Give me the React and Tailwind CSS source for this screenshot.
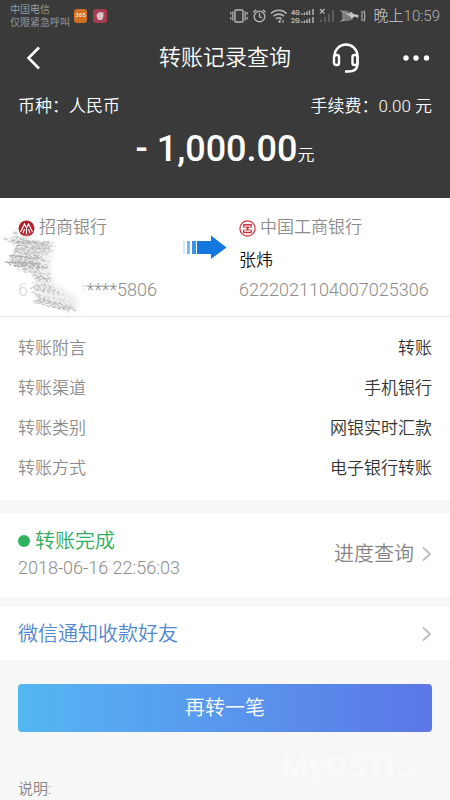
import React from 'react';

const details = [
  { label: '转账附言', value: '转账' },
  { label: '转账渠道', value: '手机银行' },
  { label: '转账类别', value: '网银实时汇款' },
  { label: '转账方式', value: '电子银行转账' },
];

// [y, left, right, slope] of each scribble row
const scribbleRows = [
  [5, 8, 15, 0.3], [8, 8, 17, 0.3], [11, 9, 19, 0.3], [14, 9, 28, 0.2], [16, -1, 40, 0.08], [18, 4, 56, 0.04],
  [20, 8, 54, 0.05], [23, 9, 50, 0.05], [26, 7, 52, 0.05], [29, 6, 47, 0.05], [32, 5, 45, 0.05],
  [35, 7, 47, 0.05], [38, 1, 42, 0.05], [40, 0, 46, 0.05], [42, 9, 50, 0.05], [45, 12, 42, 0.08],
  [48, 18, 50, 0.1], [51, 27, 48, 0.1], [54, 28, 52, 0.1], [57, 29, 50, 0.1], [60, 27, 56, 0.12],
  [63, 26, 58, 0.15], [66, 29, 64, 0.2], [69, 27, 70, 0.22], [72, 32, 76, 0.24], [75, 30, 74, 0.26],
  [78, 28, 75, 0.27],
];

const buildStrokes = () => {
  let seed = 7;
  const rand = () => {
    seed = (seed * 16807) % 2147483647;
    return seed / 2147483647;
  };
  const strokes = [];
  scribbleRows.forEach(([y, left, right, slope]) => {
    for (let i = 0; i < 4; i++) {
      const x1 = left + rand() * 6;
      const x2 = right - rand() * 10;
      let d = '';
      for (let x = x1; x < x2; x += 1.5) {
        const py = y + i * 0.8 + (x - left) * slope + rand() * 2.4 - 1.2;
        d += `${d ? 'L' : 'M'}${x.toFixed(1)} ${py.toFixed(1)}`;
      }
      strokes.push({ d, dash: `${(2 + rand() * 4).toFixed(1)} ${(1 + rand() * 2.5).toFixed(1)}`, tone: rand() });
    }
  });
  return strokes;
};

const strokes = buildStrokes();

const Scribble = () => (
  <svg className="absolute left-1 top-6 overflow-visible pointer-events-none" width="100" height="92" viewBox="0 0 100 92" aria-hidden="true">
    <defs>
      <filter id="soft" x="-20%" y="-20%" width="140%" height="140%">
        <feGaussianBlur stdDeviation="2" />
      </filter>
    </defs>
    <path d="M8 15 L34 15 L56 20 L78 40 L82 70 L76 84 L30 78 L22 56 L6 44 Z" fill="#fff" filter="url(#soft)" />
    <path d="M10 18 L50 20 L46 44 L50 60 L74 76 L74 88 L30 78 L30 52 L10 42 Z" fill="#f0f0f0" filter="url(#soft)" />
    <g fill="none" strokeWidth="0.8">
      {strokes.map((s, i) => (
        <path key={i} d={s.d} strokeDasharray={s.dash} stroke={s.tone > 0.7 ? '#9e9e9e' : s.tone > 0.25 ? '#bdbdbd' : '#f8f8f8'} />
      ))}
    </g>
  </svg>
);

const StatusIcons = () => (
  <svg width="140" height="18" viewBox="0 0 140 18" fill="none" stroke="#b4b4b4" strokeWidth="1.4" aria-hidden="true">
    {/* vibrate */}
    <rect x="5" y="3" width="8" height="12" rx="1" />
    <path d="M2.8 4.500v9M15.200 4.500v9M.8 5v2.500M.8 10v2.500M17.200 5v2.500M17.200 10v2.500" strokeWidth="1.2" />
    {/* alarm */}
    <circle cx="29.500" cy="9.500" r="5.300" />
    <path d="M29.500 6.300v3.400l2.300 1.300M23.300 5.300l3-2.600M35.700 5.300l-3-2.600" />
    {/* wifi */}
    <path d="M41 6.500c4.300-4.300 11.300-4.300 15.600 0M43.500 9.300c2.900-2.900 7.700-2.900 10.600 0M46 12c1.500-1.500 4.100-1.500 5.600 0" strokeWidth="1.600" />
    <path d="M48.500 15.500l1.500-2.500v3M53 13v3" strokeWidth="1.100" />
    {/* dual sim signal */}
    <g fontFamily="Roboto, sans-serif" fontSize="7" fontWeight="700" fill="#b4b4b4" stroke="none">
      <text x="61" y="8">4G</text>
      <text x="61" y="16">2G</text>
    </g>
    <path d="M72 8v-1.500M74.500 8v-2.500M77 8v-3.500M79.500 8v-4.500M83 8v-6M72 16v-1.500M74.500 16v-2.500M77 16v-3.500M79.500 16v-4.500M83 16v-6" strokeWidth="1.500" />
    {/* empty signal */}
    <path d="M90 2l4.500 4.500M94.500 2l-4.500 4.500" strokeWidth="1.300" />
    <path d="M91 15v-2.500M95 15v-5M99 15v-8M103 15v-12" stroke="#626262" strokeWidth="1.800" />
    {/* battery */}
    <path d="M112 3.500h4l7 3v6l-5 1.500h-6z" fill="#7a7a7a" stroke="none" />
    <path d="M114 5.500l6 1.500 1-2.500 2.500 2.500 5 1-.5 3-3-1.500-4 2-.5-2z" fill="#c8c8c8" stroke="none" />
    <path d="M110.500 3.500l3 2M110.500 14.500l4-2" strokeWidth="1" />
    <path d="M132 4v10M134 3.500c1.200 3.500 1.200 7.500 0 11" strokeWidth="1.100" />
  </svg>
);

const StatusBar = () => (
  <div className="flex h-8 items-start justify-between px-[10px] text-[#b4b4b4]">
    <div className="flex items-center gap-1 pt-[3px]">
      <div className="text-[10px] leading-[13px] text-[#a0a0a0]">
        <div>中国电信</div>
        <div>仅限紧急呼叫</div>
      </div>
      <svg width="34" height="16" viewBox="0 0 34 16" aria-hidden="true">
        <rect x="0" y="1" width="13" height="14" rx="3" fill="#cf7023" />
        <text x="6.500" y="9" textAnchor="middle" fontFamily="Roboto, sans-serif" fontSize="6" fontWeight="700" fill="#f7dfc0">365</text>
        <rect x="19" y="1" width="14" height="14" rx="3" fill="#a83d52" />
        <path d="M22.500 6.500l3-2.500 4 .5v4l-1.500 3.500h-3.500l-1.500-2.500z" fill="#d9c1c5" />
      </svg>
    </div>
    <div className="flex items-center gap-1 pt-1">
      <StatusIcons />
      <span className="text-[15px] leading-6">晚上10:59</span>
    </div>
  </div>
);

const Header = () => (
  <header className="bg-[#3a3a3a] pb-[23px] text-white">
    <StatusBar />
    <div className="grid h-[52px] grid-cols-[1fr_auto_1fr] items-center px-5">
      <button type="button" aria-label="返回" className="w-6 pl-1">
        <svg width="20" height="24" viewBox="0 0 20 24" fill="none" stroke="#fff" strokeWidth="2.600">
          <path d="M15 1.500L4.500 12L15 22.500" />
        </svg>
      </button>
      <h1 className="text-[22px] leading-8">转账记录查询</h1>
      <div className="flex items-center justify-between pl-10">
        <button type="button" aria-label="客服">
          <svg width="30" height="32" viewBox="0 0 30 32" fill="none" stroke="#fff" strokeWidth="2.400">
            <path d="M3.500 15V14a11.500 11.500 0 0 1 23 0v8M14 29.500h3c6 0 9.500-2.500 9.500-7.500" />
            <rect x="3" y="13" width="5" height="10" rx="2" />
            <rect x="21.500" y="13" width="5" height="10" rx="2" />
          </svg>
        </button>
        <button type="button" aria-label="更多">
          <svg width="28" height="8" viewBox="0 0 28 8" fill="#fff">
            <circle cx="4" cy="4" r="2.700" />
            <circle cx="14" cy="4" r="2.700" />
            <circle cx="24.500" cy="4" r="2.700" />
          </svg>
        </button>
      </div>
    </div>
    <div className="flex justify-between px-[18px] pt-[10px] text-[17px] leading-6">
      <span>币种：人民币</span>
      <span>手续费：0.00 元</span>
    </div>
    <div className="flex items-baseline justify-center pt-[11px] leading-10">
      <span className="text-[36px] font-medium">- 1,000.00</span>
      <span className="text-[17px]">元</span>
    </div>
  </header>
);

const CmbLogo = () => (
  <svg width="17" height="17" viewBox="0 0 17 17" aria-hidden="true">
    <circle cx="8.500" cy="8.500" r="8" fill="#b3202c" />
    <path d="M2.500 12L6.500 4l2 4 2-4 4 8M5 13l1.500-4M12 13l-1.500-4M8.500 9v5" fill="none" stroke="#fff" strokeWidth="1.200" />
  </svg>
);

const IcbcLogo = () => (
  <svg width="17" height="17" viewBox="0 0 17 17" fill="none" stroke="#d0343c" aria-hidden="true">
    <circle cx="8.500" cy="8.500" r="7.600" strokeWidth="1.200" />
    <path d="M4.800 7.800V4.700h7.400v3.100M4.800 9.400v3.100h7.400V9.400" strokeWidth="1.400" />
    <path d="M6.500 7.300h4M6.500 9.900h4M8.500 7v3" strokeWidth="1.400" />
  </svg>
);

const Arrow = () => (
  <svg width="44" height="26" viewBox="0 0 44 26" aria-hidden="true">
    <path d="M1 7v13" stroke="#c5e0f8" strokeWidth="1.500" />
    <path d="M5.500 7v13" stroke="#7db8ef" strokeWidth="3" />
    <path d="M11 7v13" stroke="#3a93e6" strokeWidth="4" />
    <path d="M14 7h14V1.500L43.500 13.500L28 25V20H14z" fill="#1277df" />
  </svg>
);

const Accounts = () => (
  <section className="relative flex border-b border-[#e4e4e4] bg-white pb-[14px] pl-[18px] pr-4 pt-4 text-[17px] text-[#8c8c8c]">
    <div className="flex-1">
      <div className="flex h-6 items-center gap-1 pt-1">
        <CmbLogo />
        <span>招商银行</span>
      </div>
      <div className="h-10" />
      <div className="flex w-[139px] justify-between text-lg leading-6">
        <span className="text-[#d8d8d8]">6</span>
        <span>*****5806</span>
      </div>
    </div>
    <div className="pr-3 pt-5">
      <Arrow />
    </div>
    <div className="w-[195px]">
      <div className="flex h-6 items-center gap-1 pt-1">
        <IcbcLogo />
        <span>中国工商银行</span>
      </div>
      <div className="pb-1 pt-2 leading-7 text-[#111]">张炜</div>
      <div className="text-lg leading-6">6222021104007025306</div>
    </div>
    <Scribble />
  </section>
);

const Chevron = () => (
  <svg width="10" height="16" viewBox="0 0 10 16" fill="none" stroke="#bdbdbd" strokeWidth="1.800" aria-hidden="true">
    <path d="M1 1.500L8 8L1 14.500" />
  </svg>
);

const App = () => {
  return (
    <div className="min-h-screen bg-[#f7f7f7] font-['Roboto','Noto_Sans_CJK_SC',sans-serif] font-[350]">
      <Header />
      <main>
        <Accounts />
        <dl className="bg-white px-[18px] pb-3 pt-[11px] text-[17px] leading-10">
          {details.map((item) => (
            <div key={item.label} className="flex justify-between">
              <dt className="text-[#8c8c8c]">{item.label}</dt>
              <dd className="text-[#333]">{item.value}</dd>
            </div>
          ))}
        </dl>

        <section className="mt-[13px] flex items-center justify-between bg-white px-[18px] pb-4 pt-[14px]">
          <div>
            <div className="flex items-center gap-[5px] text-xl leading-7 text-[#2fac5c]">
              <span className="h-3 w-3 rounded-full bg-[#2fb35c]" />
              转账完成
            </div>
            <div className="text-lg leading-[26px] text-[#8c8c8c]">2018-06-16 22:56:03</div>
          </div>
          <a href="#progress" className="flex items-center gap-2 text-xl leading-7 text-[#858585]">
            进度查询
            <Chevron />
          </a>
        </section>

        <a href="#notify" className="mt-[10px] flex h-[53px] items-center justify-between bg-white px-[18px] text-xl text-[#4e86d0]">
          微信通知收款好友
          <Chevron />
        </a>

        <div className="px-[18px] pt-6">
          <button type="button" className="h-12 w-full rounded bg-linear-to-r from-[#54b6f3] to-[#5b76e6] text-xl text-white">
            再转一笔
          </button>
        </div>

        <footer className="relative px-[18px] pt-[45px] text-[15px] leading-6 text-[#858585]">
          说明:
          <div className="absolute right-7 top-4 text-[32px] font-bold leading-9 text-[#fafafa]" aria-hidden="true">
            MyOSTi<span className="text-xs">.com</span>
          </div>
        </footer>
      </main>
    </div>
  );
};

export default App;
